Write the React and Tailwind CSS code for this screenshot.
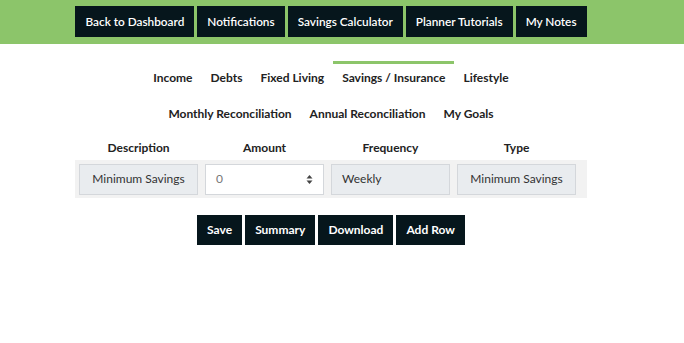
import React from "react";

const font = { fontFamily: "Lato, 'Open Sans', sans-serif" };

function TopBtn({ children }) {
  return (
    <div className="h-[31px] px-[10px] flex items-center bg-[#06161c] text-white text-[11.8px] font-semibold">
      {children}
    </div>
  );
}

function Tab({ children, active }) {
  return (
    <div className="relative px-[9px] text-[12px] font-bold text-[#222] h-[36px] flex items-center">
      {active && <div className="absolute left-0 right-0 top-[1px] h-[3px] bg-[#8cc56a]" />}
      {children}
    </div>
  );
}

function ActBtn({ children }) {
  return (
    <div className="h-[30px] px-[10px] flex items-center bg-[#06161c] text-white text-[12px] font-bold">
      {children}
    </div>
  );
}

export default function App() {
  return (
    <div style={font} className="w-[684px] h-[343px] bg-white">
      <div className="h-[44px] bg-[#8cc56a] flex justify-center pr-[22px] pt-[6px]">
        <div className="flex gap-[3px] h-[31px]">
          <TopBtn>Back to Dashboard</TopBtn>
          <TopBtn>Notifications</TopBtn>
          <TopBtn>Savings Calculator</TopBtn>
          <TopBtn>Planner Tutorials</TopBtn>
          <TopBtn>My Notes</TopBtn>
        </div>
      </div>
      <div className="w-[662px] flex flex-col items-center">
        <div className="mt-[16px] flex">
          <Tab>Income</Tab>
          <Tab>Debts</Tab>
          <Tab>Fixed Living</Tab>
          <Tab active>Savings / Insurance</Tab>
          <Tab>Lifestyle</Tab>
        </div>
        <div className="flex">
          <Tab>Monthly Reconciliation</Tab>
          <Tab>Annual Reconciliation</Tab>
          <Tab>My Goals</Tab>
        </div>
        <div className="w-[512px] mt-[3px]">
          <div className="grid grid-cols-4 gap-[7px] pl-[4px] pr-[11px] h-[25px] items-center text-[12px] font-bold text-[#222] text-center">
            <div>Description</div>
            <div>Amount</div>
            <div>Frequency</div>
            <div>Type</div>
          </div>
          <div className="bg-[#f2f2f2] h-[38px] pl-[4px] pr-[11px] grid grid-cols-4 gap-[7px] items-center text-[12px] text-[#333]">
            <div className="h-[31px] bg-[#e9ecef] border border-[#d4d7db] flex items-center justify-center">Minimum Savings</div>
            <div className="h-[31px] bg-white border border-[#d4d7db] flex items-center justify-between pl-[10px] pr-[10px]">
              <span className="text-[#777]">0</span>
              <svg width="7" height="11" viewBox="0 0 7 11">
                <path d="M3.5 1 L6.5 4.5 H0.5 Z" fill="#444" />
                <path d="M3.5 10 L6.5 6.5 H0.5 Z" fill="#444" />
              </svg>
            </div>
            <div className="h-[31px] bg-[#e9ecef] border border-[#d4d7db] flex items-center pl-[10px]">Weekly</div>
            <div className="h-[31px] bg-[#e9ecef] border border-[#d4d7db] flex items-center justify-center">Minimum Savings</div>
          </div>
        </div>
        <div className="mt-[17px] flex gap-[3px]">
          <ActBtn>Save</ActBtn>
          <ActBtn>Summary</ActBtn>
          <ActBtn>Download</ActBtn>
          <ActBtn>Add Row</ActBtn>
        </div>
      </div>
    </div>
  );
}
